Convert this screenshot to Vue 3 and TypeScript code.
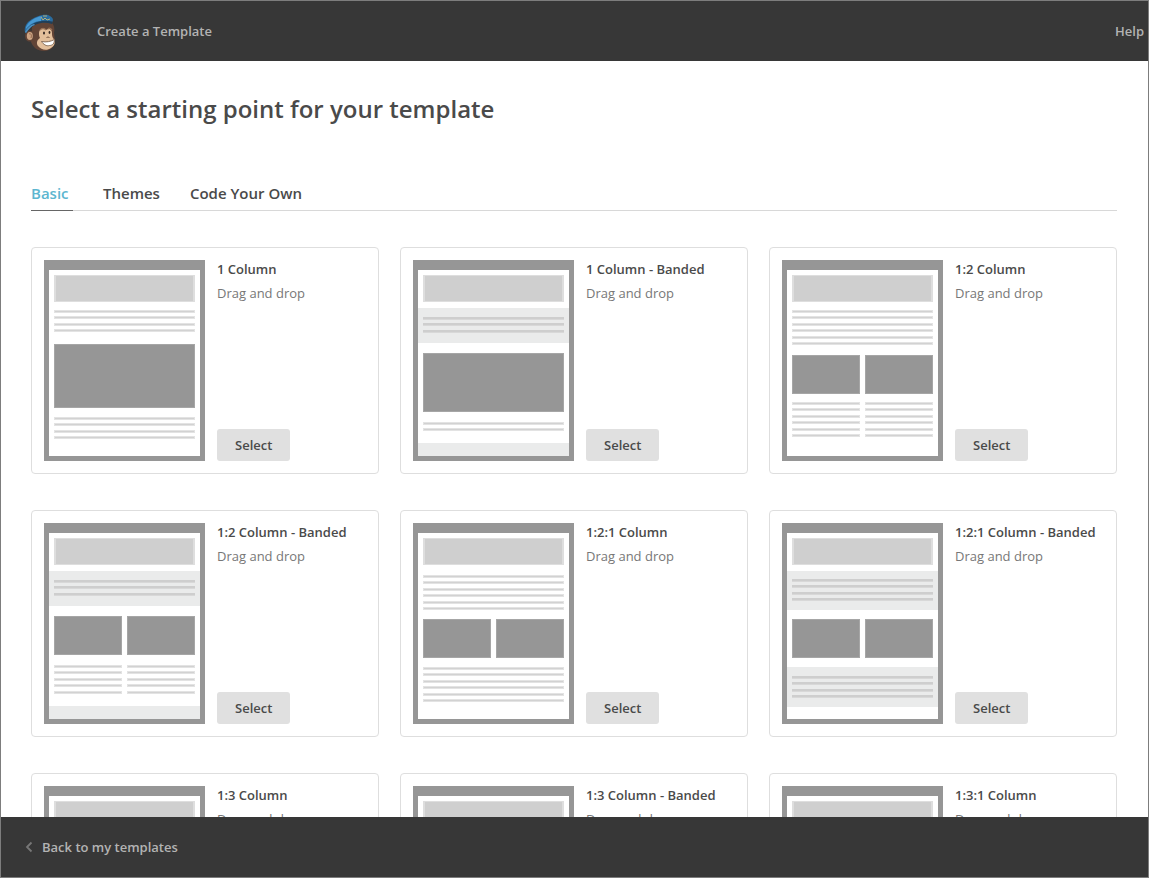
<script setup lang="ts">
import { ref } from 'vue'

type Kind = 'band' | 'block' | 'halves' | 'lines' | 'split'

interface Part {
  kind: Kind
  y: number
  h?: number
  n?: number
  dark?: boolean
}

interface Template {
  name: string
  parts: Part[]
}

interface Shape {
  x: number
  y: number
  w: number
  h: number
  cls: string
}

const tabs: string[] = ['Basic', 'Themes', 'Code Your Own']
const activeTab = ref('Basic')

const templates: Template[] = [
  {
    name: '1 Column',
    parts: [
      { kind: 'lines', y: 50, n: 4 },
      { kind: 'block', y: 84, h: 64 },
      { kind: 'lines', y: 157, n: 4 },
    ],
  },
  {
    name: '1 Column - Banded',
    parts: [
      { kind: 'band', y: 48, h: 35 },
      { kind: 'lines', y: 57, n: 3, dark: true },
      { kind: 'block', y: 93, h: 59 },
      { kind: 'lines', y: 162, n: 2 },
      { kind: 'band', y: 183, h: 13 },
    ],
  },
  {
    name: '1:2 Column',
    parts: [
      { kind: 'lines', y: 50, n: 6 },
      { kind: 'halves', y: 95, h: 39 },
      { kind: 'split', y: 142, n: 6 },
    ],
  },
  {
    name: '1:2 Column - Banded',
    parts: [
      { kind: 'band', y: 48, h: 35 },
      { kind: 'lines', y: 57, n: 3, dark: true },
      { kind: 'halves', y: 93, h: 39 },
      { kind: 'split', y: 142, n: 5 },
      { kind: 'band', y: 183, h: 13 },
    ],
  },
  {
    name: '1:2:1 Column',
    parts: [
      { kind: 'lines', y: 52, n: 6 },
      { kind: 'halves', y: 96, h: 39 },
      { kind: 'lines', y: 144, n: 6 },
    ],
  },
  {
    name: '1:2:1 Column - Banded',
    parts: [
      { kind: 'band', y: 48, h: 39 },
      { kind: 'lines', y: 56, n: 4, dark: true },
      { kind: 'halves', y: 96, h: 39 },
      { kind: 'band', y: 144, h: 40 },
      { kind: 'lines', y: 153, n: 4, dark: true },
    ],
  },
  { name: '1:3 Column', parts: [{ kind: 'lines', y: 50, n: 6 }] },
  { name: '1:3 Column - Banded', parts: [{ kind: 'band', y: 48, h: 35 }] },
  { name: '1:3:1 Column', parts: [{ kind: 'lines', y: 50, n: 6 }] },
]

const LEFT = 10
const FULL = 141
const HALF = 68
const RIGHT = 83

function textLine(x: number, y: number, w: number, dark?: boolean): Shape[] {
  if (dark) return [{ x, y, w, h: 3, cls: 'line-soft-dark' }, { x, y, w, h: 2, cls: 'line-dark' }]
  return [{ x, y, w, h: 3, cls: 'line-soft' }, { x: x + 1, y: y + 1, w: w - 2, h: 1, cls: 'line' }]
}

function block(x: number, y: number, w: number, h: number): Shape[] {
  return [
    { x, y, w, h, cls: 'block-edge' },
    { x: x + 1, y: y + 1, w: w - 2, h: h - 2, cls: 'block' },
  ]
}

function shapes(part: Part): Shape[] {
  const h = part.h ?? 0
  if (part.kind === 'band') return [{ x: 5, y: part.y, w: 151, h, cls: 'band' }]
  if (part.kind === 'block') return block(LEFT, part.y, FULL, h)
  if (part.kind === 'halves') return [LEFT, RIGHT].flatMap((x) => block(x, part.y, HALF, h))
  const out: Shape[] = []
  for (let i = 0; i < (part.n ?? 0); i++) {
    const y = part.y + Math.floor(i * 6.5)
    if (part.kind === 'split') {
      out.push(...textLine(LEFT, y, HALF), ...textLine(RIGHT, y, HALF))
    } else {
      out.push(...textLine(LEFT, y, FULL, part.dark))
    }
  }
  return out
}
</script>

<template>
  <div class="app">
    <header class="topbar">
      <a class="logo" href="#" aria-label="Home">
        <svg width="34" height="38" viewBox="0 0 34 38" aria-hidden="true">
          <path d="M8 13C13 8 24 6 28 9c2 2 3 6 2 10l1 8c0 6-5 10-11 10-7 0-11-4-13-9z" fill="#624436" />
          <ellipse cx="5.500" cy="22" rx="4.500" ry="5.500" fill="#624436" />
          <ellipse cx="5.800" cy="22" rx="3" ry="4" fill="#cfa685" />
          <path d="M5 20c2-1 3 1 2 4" fill="none" stroke="#94694f" stroke-width="1" />
          <path d="M15 19c0-4 4-6 7-3 3-2 6-1 6 3 0 2 0 3 1 5 3 3 2 8-2 10-4 3-10 2-13-2-2-3-1-6 2-8-1-2-1-3-1-5z" fill="#e3bf9b" />
          <path d="M16 16q3-3 6 0M24 15q2-2 4 1" fill="none" stroke="#9b7356" stroke-width="1.200" />
          <ellipse cx="20" cy="19" rx="1" ry="1.500" fill="#352824" />
          <ellipse cx="25.500" cy="18.500" rx="0.900" ry="1.400" fill="#352824" />
          <path d="M22.500 23.500q1.500-1 3 0" fill="none" stroke="#765440" stroke-width="1" />
          <path d="M17.500 27.500c5 1 9 0 13-2 0 4-2 6-5 6-3 1-6-1-8-4z" fill="#fff" stroke="#79604c" stroke-width="0.900" />
          <path d="M1 18C0 14 2 9 6 6.500 11 3 18 0 24 1c3 1 5 3 5 5l-1 3c-6-2-14-1-19 2-4 2-5 5-7 8z" fill="#296b9e" />
          <path d="M2 13C4 8 11 3 18 2c-1 2-1 3-1 5C11 7 6 10 2 15z" fill="#4799d3" />
          <path d="M2 17C6 9 17 5 28 7.500L28 10C19 7 10 10 5 15l-3 4z" fill="#203f59" />
          <path d="M1 18c2-4 5-7 9-8l1 1c-4 1-6 4-9 8z" fill="#4d91c1" />
          <path d="M17 3l2 3 2-2 2 2 3-1M19 2h4" fill="none" stroke="#c1b674" stroke-width="0.900" />
        </svg>
      </a>
      <span class="crumb">Create a Template</span>
      <a class="help" href="#">Help</a>
    </header>

    <main class="content">
      <h1>Select a starting point for your template</h1>
      <nav class="tabs" role="tablist" aria-label="Template type">
        <button
          v-for="tab in tabs"
          :key="tab"
          type="button"
          role="tab"
          class="tab"
          :class="{ active: tab === activeTab }"
          :aria-selected="tab === activeTab"
          @click="activeTab = tab"
        >{{ tab }}</button>
      </nav>

      <ul class="grid">
        <li v-for="template in templates" :key="template.name" class="card">
          <svg class="thumb" width="161" height="201" viewBox="0 0 161 201" aria-hidden="true">
            <rect width="161" height="201" class="frame" />
            <rect x="5" y="10" width="151" height="186" class="paper" />
            <rect x="10" y="15" width="141" height="27" class="head-edge" />
            <rect x="12" y="16" width="137" height="25" class="head" />
            <template v-for="(part, i) in template.parts" :key="i">
              <rect
                v-for="(s, j) in shapes(part)"
                :key="j"
                :x="s.x"
                :y="s.y"
                :width="s.w"
                :height="s.h"
                :class="s.cls"
              />
            </template>
          </svg>
          <div class="info">
            <h2>{{ template.name }}</h2>
            <p>Drag and drop</p>
            <button type="button" class="select" :aria-label="`Select ${template.name}`">Select</button>
          </div>
        </li>
      </ul>
    </main>

    <footer class="bottombar">
      <a href="#" class="back">
        <svg width="8" height="12" viewBox="0 0 8 12" aria-hidden="true">
          <path d="M6.500 1.500L2 6l4.500 4.500" fill="none" stroke="#777" stroke-width="1.800" />
        </svg>
        <span>Back to my templates</span>
      </a>
    </footer>
  </div>
</template>

<style>
body {
  margin: 0;
}
</style>

<style scoped>
.app {
  box-sizing: border-box;
  height: 100vh;
  display: flex;
  flex-direction: column;
  border: 1px solid #7d7d7d;
  background: #fff;
  color: #4a4a4a;
  font-family: "Open Sans", "Noto Sans", sans-serif;
  font-size: 13px;
  line-height: 20px;
}
.topbar,
.bottombar {
  flex: none;
  height: 60px;
  display: flex;
  align-items: center;
  background: #373737;
  font-weight: 600;
}
.topbar {
  padding: 0 4px 0 23px;
}
.logo {
  display: flex;
  margin-top: 4px;
}
.crumb {
  margin-left: 39px;
  color: #b3b3b3;
}
.help {
  margin-left: auto;
  color: #b3b3b3;
  text-decoration: none;
}
.content {
  flex: 1;
  min-height: 0;
  overflow-y: auto;
  scrollbar-width: none;
  padding: 32px 31px 0 30px;
}
h1 {
  margin: 0;
  font-size: 24px;
  font-weight: 600;
  line-height: 32px;
}
.tabs {
  display: flex;
  gap: 30px;
  margin-top: 56px;
  border-bottom: 1px solid #d8d8d8;
}
.tab {
  min-width: 42px;
  height: 30px;
  margin-bottom: -1px;
  padding: 0 0 6px;
  border: 0;
  border-bottom: 1px solid transparent;
  background: none;
  color: #4a4a4a;
  font: 600 15px/22px "Open Sans", "Noto Sans", sans-serif;
  text-align: left;
  cursor: pointer;
}
.tab.active {
  color: #5cb6d0;
  border-bottom-color: #666;
}
.grid {
  display: grid;
  grid-template-columns: repeat(3, minmax(0, 1fr));
  gap: 36px 21px;
  margin: 36px 0;
  padding: 0;
  list-style: none;
}
.card {
  display: flex;
  gap: 12px;
  padding: 12px;
  border: 1px solid #dedede;
  border-radius: 4px;
}
.thumb {
  flex: none;
  display: block;
}
.info {
  display: flex;
  flex-direction: column;
  align-items: flex-start;
  min-width: 0;
}
h2 {
  margin: 0;
  font-size: 13px;
  font-weight: 600;
  line-height: 18px;
  white-space: nowrap;
}
p {
  margin: 6px 0 0;
  line-height: 18px;
  color: #777;
}
.select {
  margin-top: auto;
  height: 32px;
  padding: 0 18px;
  border: 0;
  border-radius: 3px;
  background: #e0e0e0;
  color: #4a4a4a;
  font: 600 13px/32px "Open Sans", "Noto Sans", sans-serif;
  cursor: pointer;
}
.bottombar {
  padding: 0 24px;
}
.back {
  display: flex;
  align-items: center;
  gap: 9px;
  color: #b3b3b3;
  text-decoration: none;
}
.frame,
.block {
  fill: #969696;
}
.block-edge {
  fill: #a6a6a6;
}
.paper {
  fill: #fff;
}
.head-edge {
  fill: #dedede;
}
.head {
  fill: #cfcfcf;
}
.band {
  fill: #eaebeb;
}
.line-soft {
  fill: #e3e3e3;
}
.line {
  fill: #d2d2d2;
}
.line-soft-dark {
  fill: #d8d8d8;
}
.line-dark {
  fill: #cecece;
}
</style>
